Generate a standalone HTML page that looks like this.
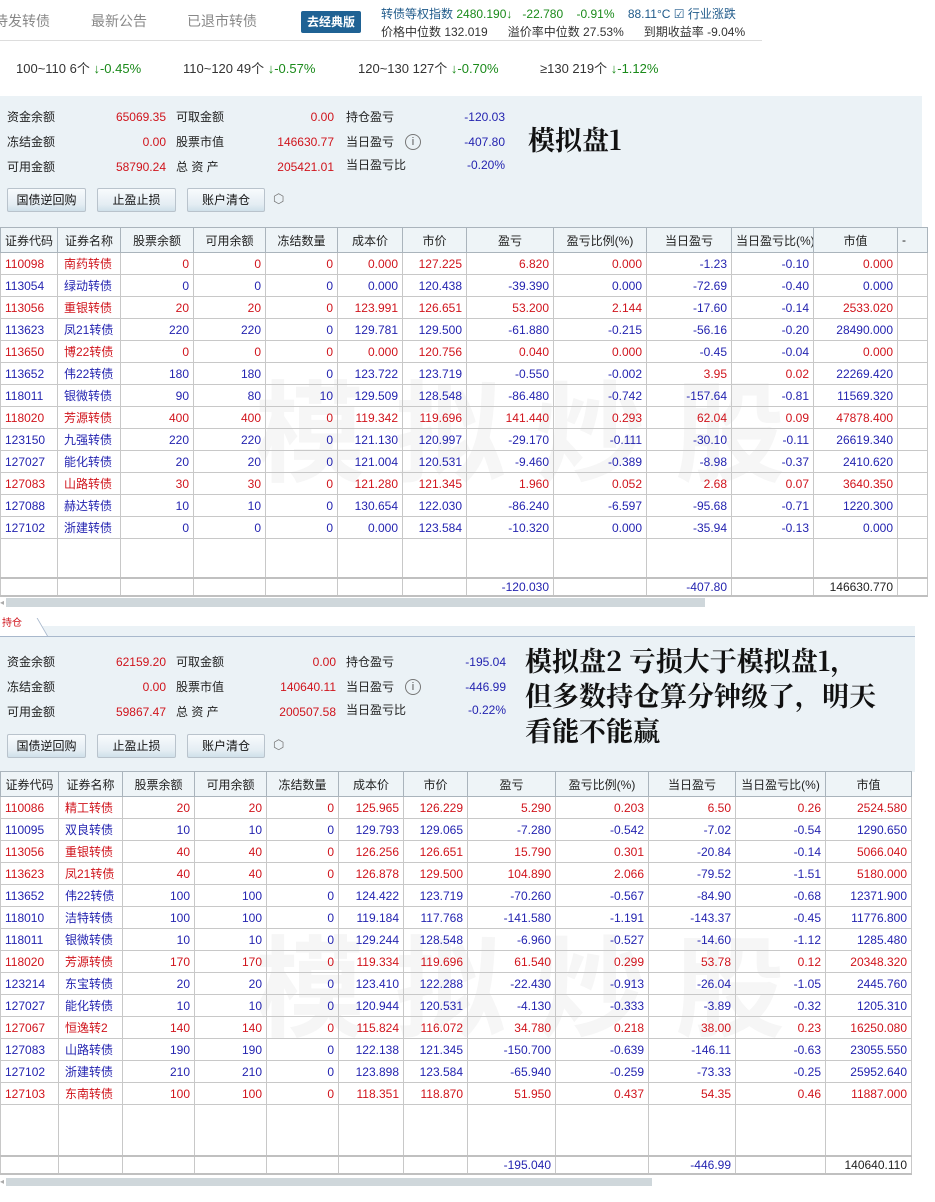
<!DOCTYPE html>
<html><head><meta charset="utf-8">
<style>
*{margin:0;padding:0;box-sizing:border-box}
body{width:935px;height:1202px;overflow:hidden;background:#fff;font-family:"Liberation Sans","Noto Sans CJK SC",sans-serif;font-size:12px;color:#222;position:relative}
.a{position:absolute;white-space:nowrap}
.k{line-height:16px}
.r{color:#d0141c}.b{color:#2424b0}.g{color:#1a8a1a}
.panel{position:absolute;background:#ebf2f6}
.btn{position:absolute;height:24px;border:1px solid #b9c3cc;background:linear-gradient(#f8fbfd,#e4edf3 70%,#cfe0ea);text-align:center;line-height:22px;font-size:12px;color:#111;border-radius:2px}
.big{position:absolute;font-family:"Noto Serif CJK SC","Liberation Serif",serif;font-weight:bold;font-size:27px;color:#111;white-space:nowrap;line-height:35px}
table{position:absolute;border-collapse:collapse;table-layout:fixed;font-size:12px}
td,th{border:1px solid #c8c8c8;height:22px;padding:0 4px;white-space:nowrap;overflow:hidden;text-align:right}
th{background:#eef4f7;font-weight:normal;text-align:center;height:25px;border-color:#aab4bc;color:#222}
td.l{text-align:left}
.wm{position:absolute;font-size:110px;font-weight:bold;color:rgba(200,200,200,0.16);letter-spacing:30px;white-space:nowrap;font-family:"Noto Sans CJK SC",sans-serif}
.sb{position:absolute;height:9px;background:#cfd7db}
</style></head><body>

<div class="a" style="left:-6px;top:11px;font-size:14px;color:#888">待发转债</div>
<div class="a" style="left:91px;top:11px;font-size:14px;color:#888">最新公告</div>
<div class="a" style="left:187px;top:11px;font-size:14px;color:#888">已退市转债</div>
<div class="a" style="left:301px;top:11px;width:60px;height:22px;background:#1f6294;color:#fff;border-radius:2px;text-align:center;line-height:22px;font-size:12px;font-weight:bold">去经典版</div>
<div class="a" style="left:381px;top:5px;color:#1f5a8a">转债等权指数 <span class="g">2480.190↓</span> &nbsp; <span class="g">-22.780</span> &nbsp; &nbsp;<span class="g">-0.91%</span> &nbsp; &nbsp;88.11°C ☑ 行业涨跌</div>
<div class="a" style="left:381px;top:23px;color:#333">价格中位数 132.019 &nbsp; &nbsp; &nbsp;溢价率中位数 27.53% &nbsp; &nbsp; &nbsp;到期收益率 -9.04%</div>
<div class="a" style="left:0;top:40px;width:762px;height:1px;background:#ddd"></div>
<div class="a" style="left:16px;top:58px;font-size:13px;color:#333">100~110 6个 <span class="g">↓-0.45%</span></div>
<div class="a" style="left:183px;top:58px;font-size:13px;color:#333">110~120 49个 <span class="g">↓-0.57%</span></div>
<div class="a" style="left:358px;top:58px;font-size:13px;color:#333">120~130 127个 <span class="g">↓-0.70%</span></div>
<div class="a" style="left:540px;top:58px;font-size:13px;color:#333">≥130 219个 <span class="g">↓-1.12%</span></div>

<div class="panel" style="left:0;top:96px;width:922px;height:132px"></div>
<div class="panel" style="left:0;top:626px;width:915px;height:146px;border-top:10px solid #ebf2f6"></div>
<div class="a" style="left:0;top:636px;width:915px;height:1px;background:#a8b8cc"></div>
<div class="a" style="left:0;top:618px;width:48px;height:18px;background:#fff;border-right:1px solid #a8b8cc;transform:skewX(30deg);transform-origin:bottom left"></div>
<div class="a r" style="left:2px;top:614px;font-size:10px">持仓</div>

<div id="acc"></div>
<div class="big" style="left:528px;top:121px">模拟盘1</div>
<div class="big" style="left:525px;top:642px">模拟盘2 亏损大于模拟盘1，<br>但多数持仓算分钟级了，明天<br>看能不能赢</div>

<div class="wm" style="left:255px;top:345px">模拟炒股</div>
<div class="wm" style="left:255px;top:900px">模拟炒股</div>

<div id="t"></div>
<div class="sb" style="left:6px;top:598px;width:699px"></div>
<div class="a" style="left:0;top:598px;font-size:8px;color:#aaa">◂</div>
<div class="sb" style="left:6px;top:1178px;width:646px;height:8px"></div>
<div class="a" style="left:0;top:1177px;font-size:8px;color:#aaa">◂</div>

<script>
function acc(y,v,bo){
 var h='',L=[['资金余额','冻结金额','可用金额'],['可取金额','股票市值','总 资 产'],['持仓盈亏','当日盈亏','当日盈亏比']];
 for(var i=0;i<3;i++){var yy=y+i*25;
  h+='<div class="a k" style="left:7px;top:'+yy+'px">'+L[0][i]+'</div>';
  h+='<div class="a k r" style="right:'+(935-v.x1)+'px;top:'+yy+'px">'+v.a[i]+'</div>';
  h+='<div class="a k" style="left:176px;top:'+yy+'px">'+L[1][i]+'</div>';
  h+='<div class="a k r" style="right:'+(935-v.x2)+'px;top:'+yy+'px">'+v.b[i]+'</div>';
  h+='<div class="a k" style="left:346px;top:'+(yy-(i==2?2:0))+'px">'+L[2][i]+'</div>';
  h+='<div class="a k b" style="right:'+(935-v.x3)+'px;top:'+(yy-(i==2?2:0))+'px">'+v.c[i]+'</div>';
 }
 h+='<div class="a" style="left:405px;top:'+(y+25)+'px;width:16px;height:16px;border:1px solid #777;border-radius:50%;text-align:center;line-height:14px;font-size:11px;color:#555">i</div>';
 var by=y+bo;
 h+='<div class="btn" style="left:7px;top:'+by+'px;width:79px">国债逆回购</div>';
 h+='<div class="btn" style="left:97px;top:'+by+'px;width:79px">止盈止损</div>';
 h+='<div class="btn" style="left:187px;top:'+by+'px;width:78px">账户清仓</div>';
 h+='<div class="a" style="left:273px;top:'+(by+3)+'px;font-size:13px;color:#777">⬡</div>';
 return h;
}
document.getElementById('acc').outerHTML=acc(109,{x1:166,x2:334,x3:505,a:['65069.35','0.00','58790.24'],b:['0.00','146630.77','205421.01'],c:['-120.03','-407.80','-0.20%']},79)+acc(654,{x1:166,x2:336,x3:506,a:['62159.20','0.00','59867.47'],b:['0.00','140640.11','200507.58'],c:['-195.04','-446.99','-0.22%']},80);

var H=['证券代码','证券名称','股票余额','可用余额','冻结数量','成本价','市价','盈亏','盈亏比例(%)','当日盈亏','当日盈亏比(%)','市值'];
var d1=[
'110098 南药转债 0 0 0 0.000 127.225 6.820 0.000 -1.23 -0.10 0.000',
'113054 绿动转债 0 0 0 0.000 120.438 -39.390 0.000 -72.69 -0.40 0.000',
'113056 重银转债 20 20 0 123.991 126.651 53.200 2.144 -17.60 -0.14 2533.020',
'113623 凤21转债 220 220 0 129.781 129.500 -61.880 -0.215 -56.16 -0.20 28490.000',
'113650 博22转债 0 0 0 0.000 120.756 0.040 0.000 -0.45 -0.04 0.000',
'113652 伟22转债 180 180 0 123.722 123.719 -0.550 -0.002 3.95 0.02 22269.420',
'118011 银微转债 90 80 10 129.509 128.548 -86.480 -0.742 -157.64 -0.81 11569.320',
'118020 芳源转债 400 400 0 119.342 119.696 141.440 0.293 62.04 0.09 47878.400',
'123150 九强转债 220 220 0 121.130 120.997 -29.170 -0.111 -30.10 -0.11 26619.340',
'127027 能化转债 20 20 0 121.004 120.531 -9.460 -0.389 -8.98 -0.37 2410.620',
'127083 山路转债 30 30 0 121.280 121.345 1.960 0.052 2.68 0.07 3640.350',
'127088 赫达转债 10 10 0 130.654 122.030 -86.240 -6.597 -95.68 -0.71 1220.300',
'127102 浙建转债 0 0 0 0.000 123.584 -10.320 0.000 -35.94 -0.13 0.000'];
var d2=[
'110086 精工转债 20 20 0 125.965 126.229 5.290 0.203 6.50 0.26 2524.580',
'110095 双良转债 10 10 0 129.793 129.065 -7.280 -0.542 -7.02 -0.54 1290.650',
'113056 重银转债 40 40 0 126.256 126.651 15.790 0.301 -20.84 -0.14 5066.040',
'113623 凤21转债 40 40 0 126.878 129.500 104.890 2.066 -79.52 -1.51 5180.000',
'113652 伟22转债 100 100 0 124.422 123.719 -70.260 -0.567 -84.90 -0.68 12371.900',
'118010 洁特转债 100 100 0 119.184 117.768 -141.580 -1.191 -143.37 -0.45 11776.800',
'118011 银微转债 10 10 0 129.244 128.548 -6.960 -0.527 -14.60 -1.12 1285.480',
'118020 芳源转债 170 170 0 119.334 119.696 61.540 0.299 53.78 0.12 20348.320',
'123214 东宝转债 20 20 0 123.410 122.288 -22.430 -0.913 -26.04 -1.05 2445.760',
'127027 能化转债 10 10 0 120.944 120.531 -4.130 -0.333 -3.89 -0.32 1205.310',
'127067 恒逸转2 140 140 0 115.824 116.072 34.780 0.218 38.00 0.23 16250.080',
'127083 山路转债 190 190 0 122.138 121.345 -150.700 -0.639 -146.11 -0.63 23055.550',
'127102 浙建转债 210 210 0 123.898 123.584 -65.940 -0.259 -73.33 -0.25 25952.640',
'127103 东南转债 100 100 0 118.351 118.870 51.950 0.437 54.35 0.46 11887.000'];
function tbl(top,W,data,emptyH,tot,extra){
 var h='<table style="left:0;top:'+top+'px;width:'+W.reduce(function(a,b){return a+b},0)+'px"><colgroup>';
 W.forEach(function(w){h+='<col style="width:'+w+'px">'});
 h+='</colgroup><tr>';
 H.forEach(function(x){h+='<th>'+x+'</th>'});
 if(extra)h+='<th style="text-align:left">-</th>';
 h+='</tr>';
 data.forEach(function(s){var c=s.split(' ');var rc=c[7][0]=='-'?'b':'r';var dc=c[9][0]=='-'?'b':'r';
  h+='<tr>';
  c.forEach(function(v,i){var cl=(i==9||i==10)?dc:rc;h+='<td class="'+cl+(i<2?' l':'')+'"'+(i==1?' style="padding-left:6px"':'')+'>'+v+'</td>'});
  if(extra)h+='<td></td>';
  h+='</tr>'});
 h+='<tr>';for(var i=0;i<W.length;i++)h+='<td style="height:'+emptyH+'px;border-bottom:2px solid #c0c0c0"></td>';h+='</tr>';
 h+='<tr>';for(var i=0;i<W.length;i++){var v=i==7?tot[0]:i==9?tot[1]:i==11?tot[2]:'';h+='<td class="'+(i==11?'':'b')+'" style="height:18px;border-bottom:2px solid #c0c0c0">'+v+'</td>'}h+='</tr>';
 return h+'</table>';
}
document.getElementById('t').outerHTML=
 tbl(227,[57,63,73,72,72,65,64,87,93,85,82,84,30],d1,39,['-120.030','-407.80','146630.770'],true)+
 tbl(771,[58,64,72,72,72,65,64,88,93,87,90,86],d2,51,['-195.040','-446.99','140640.110'],false);
</script>
</body></html>
